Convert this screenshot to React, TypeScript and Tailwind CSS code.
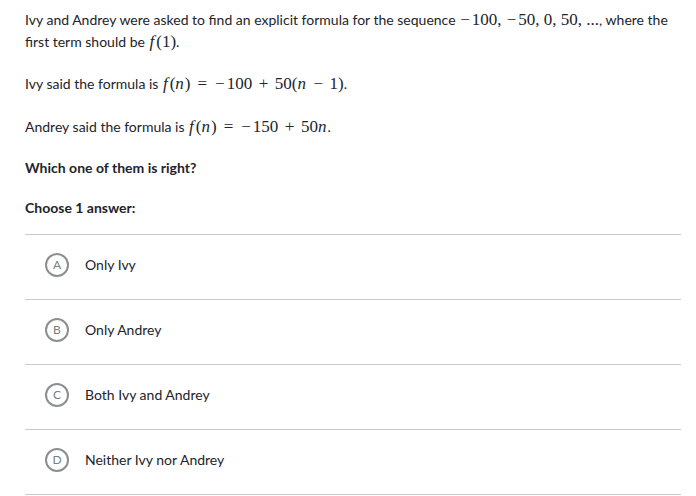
const M = ({ children }: { children: React.ReactNode }) => (
  <span className="font-['Liberation_Serif','DejaVu_Serif',serif] text-[17px] leading-none">{children}</span>
);

const I = ({ children }: { children: React.ReactNode }) => <i className="pr-[1px]">{children}</i>;
const F = () => <i className="pl-[1px] pr-[2px]">f</i>;
const Rel = ({ c }: { c: string }) => <span className="mx-[7px]">{c}</span>;
const Bin = ({ c }: { c: string }) => <span className="mx-[6.5px]">{c}</span>;
const Neg = () => <span className="ml-[1px] mr-[2px]">−</span>;

const options = [
  { letter: 'A', text: 'Only Ivy' },
  { letter: 'B', text: 'Only Andrey' },
  { letter: 'C', text: 'Both Ivy and Andrey' },
  { letter: 'D', text: 'Neither Ivy nor Andrey' },
];

export default function App() {
  return (
    <div className="w-[696px] h-[496px] overflow-hidden bg-white font-['Lato','Noto_Sans',sans-serif] text-[14px] text-[#21242c]">
      <div className="pl-[25px] pr-[15px] pt-[9px]">
        <p className="leading-[22px] pr-[5px]">
          Ivy and Andrey were asked to find an explicit formula for the sequence{' '}
          <M>
            <Neg />
            100, <Neg />
            50, 0, 50, ...
          </M>
          , where the first term should be{' '}
          <M>
            <F />
            (1)
          </M>
          .
        </p>
        <p className="leading-[22px] mt-[20px]">
          Ivy said the formula is{' '}
          <M>
            <F />(<I>n</I>)
            <Rel c="=" />
            <Neg />
            100
            <Bin c="+" />
            50(<I>n</I>
            <Bin c="−" />
            1)
          </M>
          .
        </p>
        <p className="leading-[22px] mt-[21px]">
          Andrey said the formula is{' '}
          <M>
            <F />(<I>n</I>)
            <Rel c="=" />
            <Neg />
            150
            <Bin c="+" />
            50<I>n</I>
          </M>
          .
        </p>
        <p className="leading-[22px] mt-[19px] font-bold">Which one of them is right?</p>
        <p className="leading-[22px] mt-[18px] font-bold">Choose 1 answer:</p>
        <div className="mt-[15px] w-[656px] border-t border-[#c8cacc]">
          {options.map((o) => (
            <div key={o.letter} className="h-[65px] pb-[5px] border-b border-[#c8cacc] flex items-center pl-[20px]">
              <div className="shrink-0 w-6 h-6 min-w-6 rounded-full border-2 border-[#8c8e91] flex items-center justify-center text-[12px] leading-none text-[#7a7d80]">
                {o.letter}
              </div>
              <span className="ml-[16px] text-[14px]">{o.text}</span>
            </div>
          ))}
        </div>
      </div>
    </div>
  );
}
